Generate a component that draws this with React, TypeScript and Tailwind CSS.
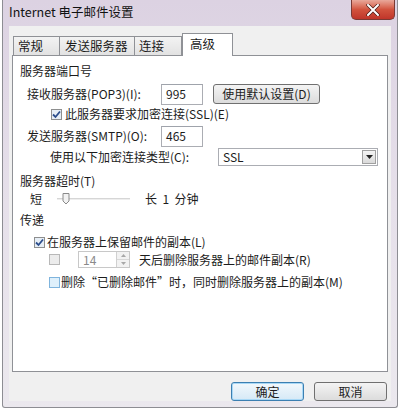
import React from "react";

const F = { fontFamily: '"Noto Sans CJK SC", "Liberation Sans", sans-serif' };

function Check({ checked, variant = "normal" }: { checked?: boolean; variant?: "normal" | "disabled" | "blue" }) {
  const border = variant === "disabled" ? "border-[#b8b8b8]" : variant === "blue" ? "border-[#7fb4dd]" : "border-[#8e8f8f]";
  const bg = variant === "disabled" ? "bg-[#ececec]" : variant === "blue" ? "bg-[#dff0fb]" : "bg-[#e6eef6]";
  return (
    <div className={`w-[11px] h-[11px] border ${border} ${bg} flex items-center justify-center shrink-0`}>
      {checked && (
        <svg width="9" height="9" viewBox="0 0 9 9">
          <path d="M1 4.5 L3.5 7 L8 1.5" stroke="#2b4d8c" strokeWidth="1.8" fill="none" />
        </svg>
      )}
    </div>
  );
}

function SectionHeader({ text, mt }: { text: string; mt: string }) {
  return (
    <div className={`flex items-center h-[16px] ${mt}`}>
      <span className="whitespace-nowrap">{text}</span>
      <div className="flex-1 h-px bg-[#cfcfcf] ml-[5px] border-b border-white" />
    </div>
  );
}

export default function App() {
  return (
    <div className="w-[400px] h-[414px] bg-white text-[12px] text-[#1c1c1c] leading-none" style={F}>
      <div className="ml-[2px] w-[396px] h-[408px] border border-[#8d8d93] border-t-0 rounded-b-[3px] bg-gradient-to-b from-[#dcd2e2] via-[#e6e0ea] to-[#ebe8ee] flex flex-col relative">
        {/* Title bar */}
        <div className="h-[28px] flex items-center pl-[6px] text-[12.5px] text-[#111]">
          <span className="-mt-[2px]">Internet 电子邮件设置</span>
        </div>
        <div className="absolute right-[2px] top-0 w-[44px] h-[20px] rounded-b-[5px] border border-[#7a3a34] border-t-0 bg-gradient-to-b from-[#e8a89a] via-[#d2533e] to-[#c0352a] flex items-center justify-center">
          <svg width="14" height="12" viewBox="0 0 14 12">
            <path d="M2 1 L12 11 M12 1 L2 11" stroke="#4a1a16" strokeWidth="3.4" strokeLinecap="round" />
            <path d="M2 1 L12 11 M12 1 L2 11" stroke="#ffffff" strokeWidth="2" strokeLinecap="round" />
          </svg>
        </div>

        {/* Client area */}
        <div className="flex-1 mx-[6px] mb-[6px] bg-[#f0f0f0] flex flex-col px-[3px]">
          {/* Tabs */}
          <div className="flex items-end h-[29px] pl-[1px] relative z-10">
            <div className="h-[19px] w-[47px] border border-[#8f9196] border-b-0 bg-gradient-to-b from-[#f3f3f3] to-[#e2e2e2] flex items-center pl-[4px] text-[12.5px]">常规</div>
            <div className="h-[19px] w-[75px] border border-[#8f9196] border-b-0 border-l-0 bg-gradient-to-b from-[#f3f3f3] to-[#e2e2e2] flex items-center pl-[5px] text-[12.5px]">发送服务器</div>
            <div className="h-[19px] w-[47px] border border-[#8f9196] border-b-0 border-l-0 bg-gradient-to-b from-[#f3f3f3] to-[#e2e2e2] flex items-center pl-[4px] text-[12.5px]">连接</div>
            <div className="h-[23px] w-[51px] -mb-px border border-[#8f9196] border-b-0 bg-white flex items-start pt-[4px] pl-[7px] text-[12.5px]">高级</div>
          </div>
          {/* Panel */}
          <div className="h-[317px] border border-[#8f9196] bg-white flex flex-col pl-[7px] pr-[9px]">
            <SectionHeader text="服务器端口号" mt="mt-[7px]" />
            <div className="flex items-center h-[22px] mt-[4px]">
              <span className="ml-[7px] w-[134px] whitespace-nowrap">接收服务器(POP3)(I):</span>
              <div className="w-[42px] h-[21px] border border-[#abadb3] border-t-[#9fa3ab] flex items-center pl-[4px]">995</div>
              <div className="ml-[10px] w-[107px] h-[20px] border border-[#707070] rounded-[3px] bg-gradient-to-b from-[#f4f4f4] to-[#dcdcdc] flex items-center justify-center whitespace-nowrap">使用默认设置(D)</div>
            </div>
            <div className="flex items-center h-[16px] mt-[1px] ml-[31px]">
              <Check checked />
              <span className="ml-[3px] whitespace-nowrap">此服务器要求加密连接(SSL)(E)</span>
            </div>
            <div className="flex items-center h-[22px] mt-[3px]">
              <span className="ml-[7px] w-[134px] whitespace-nowrap">发送服务器(SMTP)(O):</span>
              <div className="w-[42px] h-[21px] border border-[#abadb3] border-t-[#9fa3ab] flex items-center pl-[4px]">465</div>
            </div>
            <div className="flex items-center h-[19px]">
              <span className="ml-[30px] w-[169px] whitespace-nowrap">使用以下加密连接类型(C):</span>
              <div className="w-[161px] h-[18px] border border-[#abadb3] flex items-center pl-[4px] pr-[1px]">
                <span className="flex-1">SSL</span>
                <div className="w-[14px] h-[14px] border border-[#a0a0a0] bg-gradient-to-b from-[#f4f4f4] to-[#dadada] flex items-center justify-center">
                  <svg width="7" height="4" viewBox="0 0 7 4"><path d="M0 0 L7 0 L3.5 4 Z" fill="#222" /></svg>
                </div>
              </div>
            </div>
            <SectionHeader text="服务器超时(T)" mt="mt-[7px]" />
            <div className="flex items-center h-[16px] mt-[2px]">
              <span className="ml-[10px]">短</span>
              <div className="ml-[15px] w-[73px] h-[12px] relative flex items-center">
                <div className="w-full h-[2px] bg-[#d6d6d6] border-b border-[#eeeeee]" />
                <svg className="absolute left-[5px] top-0" width="8" height="12" viewBox="0 0 8 12">
                  <path d="M1 0.5 L7 0.5 L7 8 L4 11 L1 8 Z" fill="#f2f2f2" stroke="#8a8a8a" />
                </svg>
              </div>
              <span className="ml-[15px] whitespace-nowrap">长&nbsp;&nbsp;1&nbsp;&nbsp;分钟</span>
            </div>
            <SectionHeader text="传递" mt="mt-[5px]" />
            <div className="flex items-center h-[16px] mt-[6px] ml-[14px]">
              <Check checked />
              <span className="ml-[2px] whitespace-nowrap">在服务器上保留邮件的副本(L)</span>
            </div>
            <div className="flex items-center h-[17px] mt-[1px] ml-[29px]">
              <Check variant="disabled" />
              <div className="ml-[18px] w-[52px] h-[17px] border border-[#c8c8c8] flex items-center">
                <span className="flex-1 pl-[4px] text-[#8a8a8a]">14</span>
                <div className="w-[13px] h-full border-l border-[#d0d0d0] flex flex-col">
                  <div className="flex-1 bg-[#f2f2f2] border-b border-[#d8d8d8] flex items-center justify-center">
                    <svg width="5" height="3" viewBox="0 0 5 3"><path d="M0 3 L5 3 L2.5 0 Z" fill="#a8a8a8" /></svg>
                  </div>
                  <div className="flex-1 bg-[#f2f2f2] flex items-center justify-center">
                    <svg width="5" height="3" viewBox="0 0 5 3"><path d="M0 0 L5 0 L2.5 3 Z" fill="#a8a8a8" /></svg>
                  </div>
                </div>
              </div>
              <span className="ml-[9px] whitespace-nowrap">天后删除服务器上的邮件副本(R)</span>
            </div>
            <div className="flex items-center h-[16px] mt-[6px] ml-[29px]">
              <Check variant="blue" />
              <span className="ml-[1px] whitespace-nowrap">删除“已删除邮件”时，同时删除服务器上的副本(M)</span>
            </div>
          </div>
          {/* Buttons */}
          <div className="flex justify-end mt-[10px] gap-[10px] pr-[1px]">
            <div className="w-[73px] h-[19px] rounded-[3px] border border-[#3c7fb1] bg-gradient-to-b from-[#f2f8fc] to-[#d6e9f6] shadow-[inset_0_0_0_1px_#a8d8f6] flex items-center justify-center">确定</div>
            <div className="w-[73px] h-[19px] rounded-[3px] border border-[#707070] bg-gradient-to-b from-[#f4f4f4] to-[#dcdcdc] flex items-center justify-center">取消</div>
          </div>
        </div>
      </div>
    </div>
  );
}
